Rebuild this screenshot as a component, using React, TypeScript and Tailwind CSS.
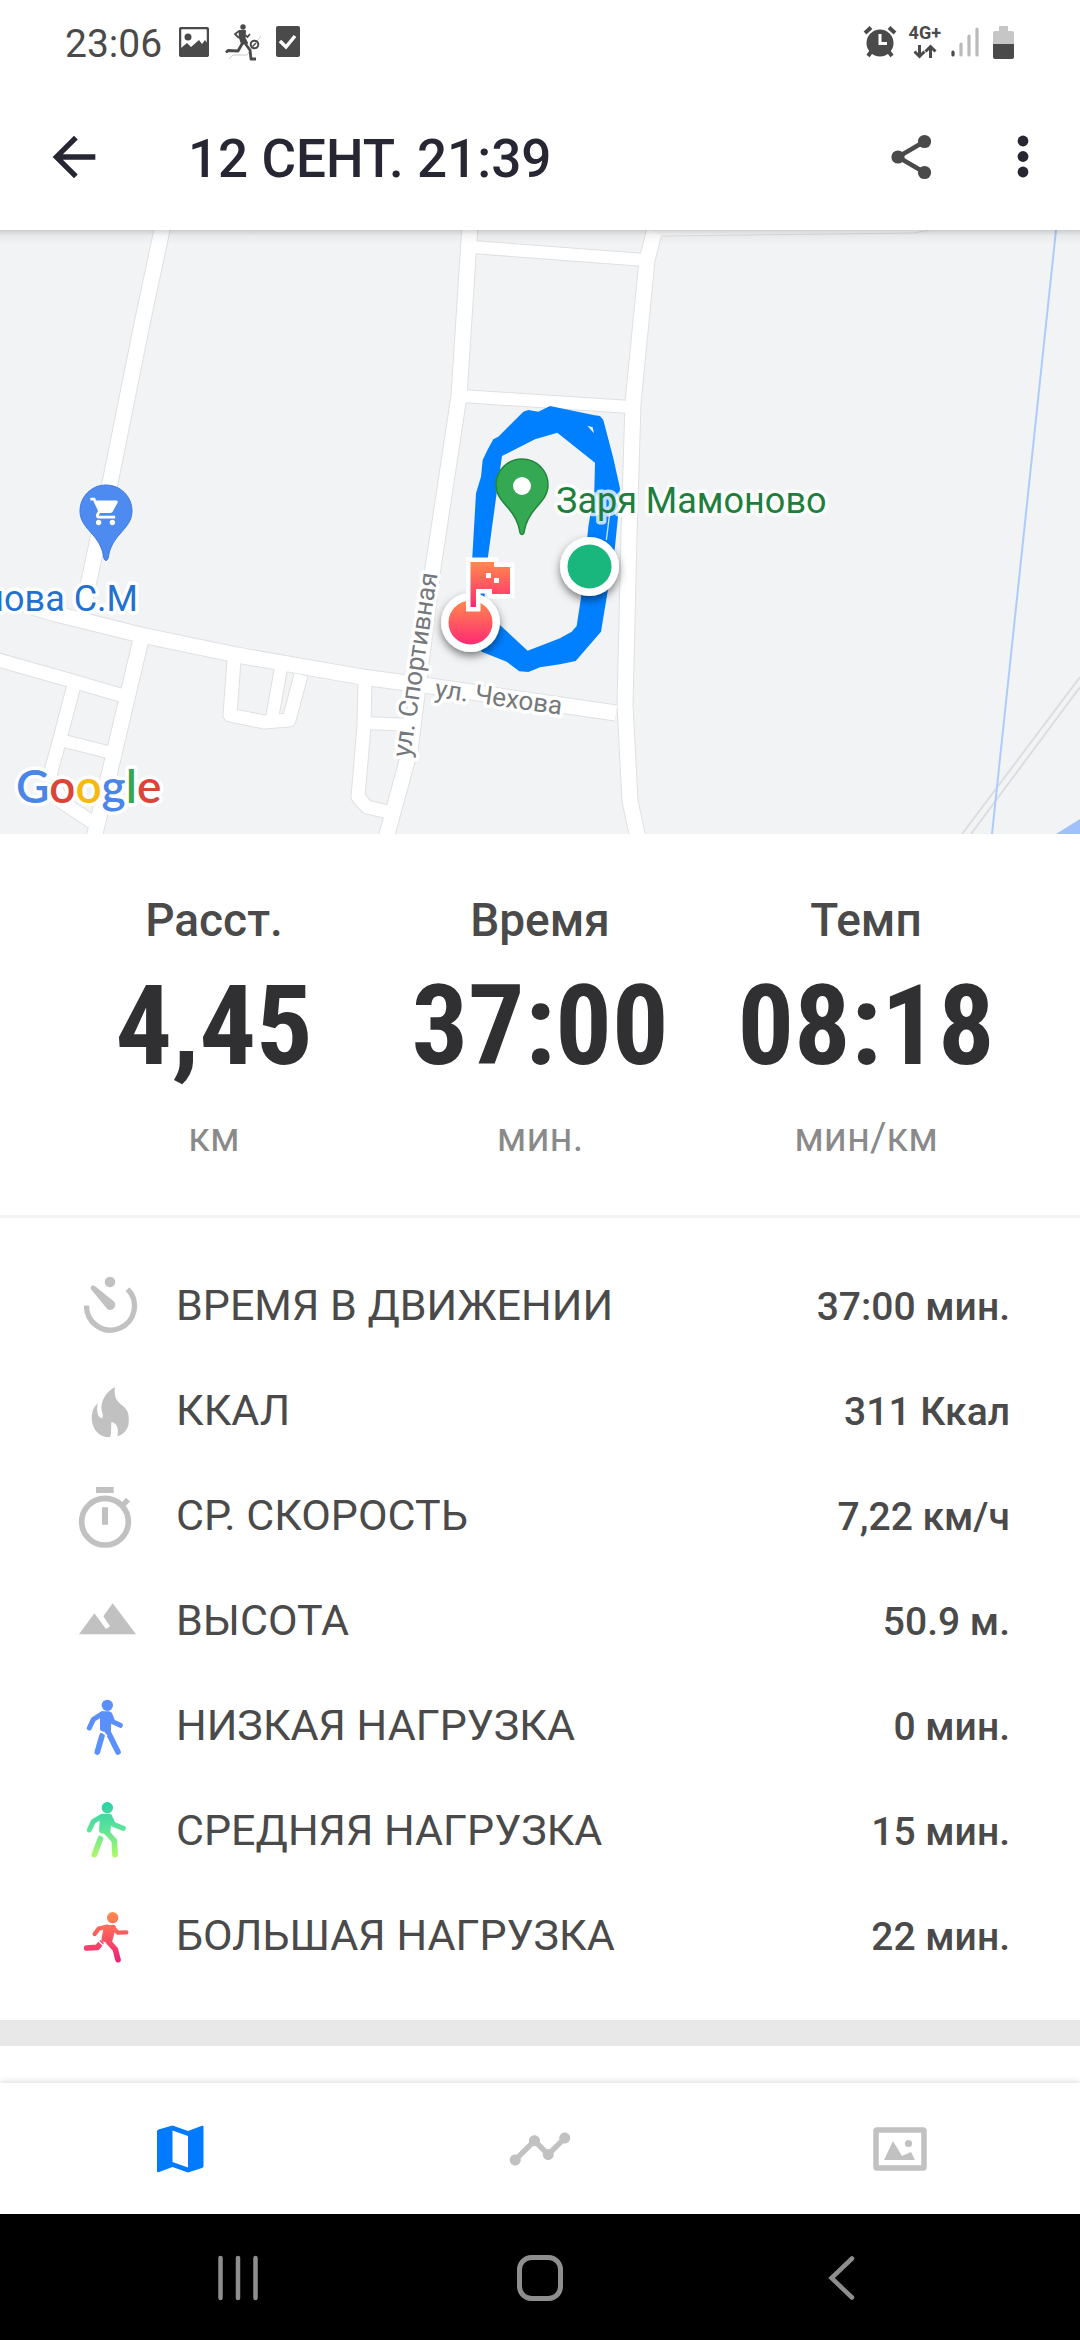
import React from "react";
import { MdArrowBack, MdShoppingCart, MdTimeline } from "react-icons/md";

const PIN =
  "M26 0C11.600 0 0 11.500 0 26C0 36 6 42 13 50C19 57 22 63 23.500 71C24 77 28 77 28.500 71C30 63 33 57 39 50C46 42 52 36 52 26C52 11.500 40.400 0 26 0Z";

/* Streets: [points, width] */
const ROADS: [string, number][] = [
  ["163,-5 142,94 110,253 87,360 83,378", 15],
  ["-5,365 52,383 141,405 237,425 362,447 430,456 616,483", 15],
  ["-5,429 69,450 124,466", 13],
  ["142,405 129,460 113,528 93,612", 15],
  ["74,455 58,516 50,545 62,572 92,592", 13],
  ["64,511 112,523", 12],
  ["234,430 230,485 264,492 289,490 301,445", 13],
  ["281,438 272,488", 12],
  ["365,450 364,496 358,567 367,577 388,582", 13],
  ["366,493 412,495", 12],
  ["470,-5 459,166 433,338 410,520 386,608", 15],
  ["472,17 645,30", 12],
  ["462,166 630,177", 12],
  ["656,-5 647,30 633,173 629,306 625,475 630,571 638,608", 15],
];

function RouteMap() {
  return (
    <svg
      viewBox="0 0 1080 604"
      preserveAspectRatio="xMidYMid slice"
      className="block w-full font-['Roboto',sans-serif]"
      role="img"
      aria-label="Карта маршрута"
    >
      <defs>
        <linearGradient id="finish" x1="0" y1="0" x2="0" y2="1">
          <stop offset="0" stopColor="#ff8a4c" />
          <stop offset="1" stopColor="#ff2975" />
        </linearGradient>
        <linearGradient id="barShadow" x1="0" y1="0" x2="0" y2="1">
          <stop offset="0" stopColor="#000" stopOpacity=".16" />
          <stop offset=".4" stopColor="#000" stopOpacity=".04" />
          <stop offset="1" stopColor="#000" stopOpacity="0" />
        </linearGradient>
        <filter id="drop" x="-50%" y="-50%" width="200%" height="200%">
          <feDropShadow dx="0" dy="4" stdDeviation="4" floodColor="#000" floodOpacity=".5" />
        </filter>
      </defs>
      <rect width="1080" height="604" fill="#f1f3f5" />
      <g fill="none" strokeLinejoin="round">
        {ROADS.map(([p, w]) => (
          <polyline key={p} points={p} stroke="#dfe0e2" strokeWidth={w + 2} />
        ))}
        {ROADS.map(([p, w]) => (
          <polyline key={p} points={p} stroke="#fff" strokeWidth={w} />
        ))}
        <path d="M650 0L662 6L914 3L929 0Z" fill="#fafafa" />
        <path d="M662 6L914 3L929 0" stroke="#dfe0e2" />
        <path d="M962 604L1080 447M971 604L1080 457" stroke="#dcdddf" strokeWidth="2" />
        <path d="M1056 0L992 604" stroke="#aecbfa" strokeWidth="2" />
      </g>
      <path d="M1056 604L1080 589V604Z" fill="#9fc0fa" />

      {/* Recorded laps */}
      <g transform="translate(400 150) scale(.33333)">
        <path
          fillRule="evenodd"
          fill="#0080ff"
          d="M450 78L580 105L600 108L610 120L640 235L660 325L655 400L645 500L603 755L527 843L480 853L420 862L385 876L358 874L320 845L245 815L200 740L217 530L228 340L243 290L248 240L265 205L280 178L295 170L370 95L385 90L415 95ZM472 158L405 178L306 228L290 340L264 530L250 690L303 738L383 812L480 775L515 755L530 738L545 640L565 440L583 330L585 248Z"
        />
        <path d="M562 137L578 142L582 160Z" fill="#f1f3f5" />
        <path d="M629 400L619 480" stroke="#cfe5fb" strokeWidth="4" />
      </g>

      <g transform="translate(80 255)">
        <path d={PIN} fill="#4d8bf0" stroke="#3f79dd" strokeWidth="1" />
        <MdShoppingCart x="9" y="10" size="33" color="#fff" />
      </g>
      <g transform="translate(496 229)">
        <path d={PIN} fill="#34a853" stroke="#22863a" strokeWidth="1.500" />
        <circle cx="26" cy="27" r="9" fill="#fff" />
      </g>

      <g stroke="#fff" strokeLinejoin="round" style={{ paintOrder: "stroke" }}>
        <text x="556" y="283" fontSize="36" fill="#1e7e3c" strokeWidth="7" strokeOpacity=".75">
          Заря Мамоново
        </text>
        <text x="138" y="381" fontSize="36" textAnchor="end" fill="#2271d1" strokeWidth="7">
          нова С.М
        </text>
        <text transform="translate(410 528) rotate(-81.500)" fontSize="26" fill="#75787c" strokeWidth="7">
          ул. Спортивная
        </text>
        <text transform="translate(434 467) rotate(8)" fontSize="26" fill="#75787c" strokeWidth="7">
          ул. Чехова
        </text>
        <text x="16" y="573" fontSize="46" fontWeight="600" strokeWidth="7" className="font-['Lato',sans-serif]">
          <tspan fill="#4a86e8">G</tspan>
          <tspan fill="#dc4437">o</tspan>
          <tspan fill="#f5b912">o</tspan>
          <tspan fill="#4a86e8">g</tspan>
          <tspan fill="#36a556">l</tspan>
          <tspan fill="#dc4437">e</tspan>
        </text>
      </g>

      <circle cx="589.500" cy="336.500" r="29.500" fill="#fff" filter="url(#drop)" />
      <circle cx="589.500" cy="336.500" r="22" fill="#19b67d" />
      <circle cx="470.500" cy="392.500" r="29.500" fill="#fff" filter="url(#drop)" />
      <circle cx="470.500" cy="392.500" r="22" fill="url(#finish)" />
      <path
        d="M470.500 332H494V337H510V364H492V359H476V377H470.500Z"
        fill="url(#finish)"
        stroke="#fff"
        strokeWidth="9"
        style={{ paintOrder: "stroke" }}
      />
      <path d="M486 343h5v5h-5zM494 348h5v5h-5z" fill="#fff" />
      <rect width="1080" height="14" fill="url(#barShadow)" />
    </svg>
  );
}

const GREY = "#c1c1c1";

function Icon({ box, children }: { box: string; children: React.ReactNode }) {
  return (
    <svg viewBox={box} className="h-16 w-16 shrink-0 overflow-visible" aria-hidden="true">
      {children}
    </svg>
  );
}

const MovingIcon = (
  <Icon box="0 0 64 64">
    <circle cx="35" cy="10" r="5.300" fill={GREY} />
    <path d="M11.500 33.500A24 24 0 1 0 52.600 17.200" fill="none" stroke={GREY} strokeWidth="5.300" />
    <path d="M16.500 18C14 14.500 18 12 20.500 14.500L39 29.500C43 34 37 40.500 32.300 37Z" fill={GREY} />
  </Icon>
);

const FlameIcon = (
  <Icon box="45 379 192 192">
    <path
      fill={GREY}
      d="M165 410C150 415 125 440 124 470C124 485 132 492 127 503C115 503 108 485 113 458C95 475 94 497 96 512C100 540 120 560 147 560C154 555 153 550 153 540C155 530 152 520 155 514C172 518 177 535 172 557C190 553 206 535 206 515C208 490 203 476 188 465C170 452 161 440 165 410Z"
    />
  </Icon>
);

const StopwatchIcon = (
  <Icon box="45 694 192 192">
    <g stroke={GREY} fill="none">
      <circle cx="135" cy="813" r="70" strokeWidth="17" />
      <path d="M108 718H161M135 770V822" strokeWidth="18" />
      <path d="M186 766L204 747" strokeWidth="16" />
    </g>
  </Icon>
);

const MountainIcon = (
  <Icon box="45 1009 192 192">
    <path fill={GREY} d="M57 1151L103 1088L138 1135L150 1127L130 1097L158 1058L228 1151Z" />
  </Icon>
);

const WalkIcon = (
  <Icon box="45 154 192 192">
    <g stroke="#5b8ff9" fill="none" strokeLinecap="round" strokeLinejoin="round">
      <path d="M126 285L112 334M138 262L174 334" strokeWidth="17" />
      <path d="M118 270L140 284" stroke="#fff" strokeWidth="4" />
      <path d="M88 262L100 236L126 220M150 222L158 243L181 254" strokeWidth="15" />
      <path d="M128 220H146L145 268L128 264Z" strokeWidth="16" fill="#5b8ff9" />
      <circle cx="142" cy="194" r="17" fill="#5b8ff9" stroke="none" />
    </g>
  </Icon>
);

const JogIcon = (
  <Icon box="45 469 192 192">
    <linearGradient id="jog" gradientUnits="userSpaceOnUse" x1="0" y1="485" x2="0" y2="650">
      <stop offset="0" stopColor="#27d3a4" />
      <stop offset=".5" stopColor="#5fe39b" />
      <stop offset="1" stopColor="#b0fa62" />
    </linearGradient>
    <g stroke="url(#jog)" fill="none" strokeLinecap="round" strokeLinejoin="round">
      <path d="M122 592L103 642M140 575L163 600L165 642" strokeWidth="17" />
      <path d="M112 578L136 592" stroke="#fff" strokeWidth="4" />
      <path d="M88 568L100 542L126 527M150 530L160 551L190 563" strokeWidth="15" />
      <path d="M128 527H148L143 574L125 570Z" strokeWidth="16" fill="url(#jog)" />
      <circle cx="142" cy="501" r="17" fill="url(#jog)" stroke="none" />
    </g>
  </Icon>
);

const RunIcon = (
  <Icon box="45 784 192 192">
    <linearGradient id="run" gradientUnits="userSpaceOnUse" x1="0" y1="815" x2="0" y2="965">
      <stop offset="0" stopColor="#ff8a50" />
      <stop offset=".5" stopColor="#fb5560" />
      <stop offset="1" stopColor="#ee1f7c" />
    </linearGradient>
    <g stroke="url(#run)" fill="none" strokeLinecap="round" strokeLinejoin="round">
      <path d="M80 922L112 920L122 908M145 903L166 926L174 957" strokeWidth="17" />
      <path d="M112 898L134 918" stroke="#fff" strokeWidth="4" />
      <path d="M104 880L116 864L142 858M162 864L174 876L199 875" strokeWidth="13" />
      <path d="M138 862L160 860L150 898L132 896Z" strokeWidth="15" fill="url(#run)" />
      <circle cx="158" cy="831" r="17" fill="url(#run)" stroke="none" />
    </g>
  </Icon>
);

const DETAILS = [
  { icon: MovingIcon, label: "ВРЕМЯ В ДВИЖЕНИИ", value: "37:00 мин." },
  { icon: FlameIcon, label: "ККАЛ", value: "311 Ккал" },
  { icon: StopwatchIcon, label: "СР. СКОРОСТЬ", value: "7,22 км/ч" },
  { icon: MountainIcon, label: "ВЫСОТА", value: "50.9 м." },
  { icon: WalkIcon, label: "НИЗКАЯ НАГРУЗКА", value: "0 мин." },
  { icon: JogIcon, label: "СРЕДНЯЯ НАГРУЗКА", value: "15 мин." },
  { icon: RunIcon, label: "БОЛЬШАЯ НАГРУЗКА", value: "22 мин." },
];

const STATS = [
  { label: "Расст.", value: "4,45", unit: "км" },
  { label: "Время", value: "37:00", unit: "мин." },
  { label: "Темп", value: "08:18", unit: "мин/км" },
];

function StatusBar() {
  return (
    <div className="flex h-[84px] items-center justify-between pr-[66px] pl-[65px] text-[#4a4a4a]">
      <div className="flex items-center">
        <span className="pt-1 text-[39px] leading-none">23:06</span>
        <svg viewBox="0 0 30 30" className="ml-[17px] h-[30px] w-[30px]" aria-hidden="true">
          <rect x="1" y="1" width="28" height="28" rx="2" fill="none" stroke="currentColor" strokeWidth="2.500" />
          <circle cx="9" cy="10" r="3.500" fill="currentColor" />
          <path d="M2 21L8 16L12 20L20 13L23 17L26 13L29 17V29H2Z" fill="currentColor" />
        </svg>
        <svg viewBox="0 0 36 37" className="ml-4 h-[37px] w-9" fill="none" stroke="currentColor" aria-hidden="true">
          <path d="M4 35L8 31H22L36 12" stroke="#ccc" strokeWidth="1" />
          <circle cx="18" cy="3" r="2.700" fill="currentColor" stroke="none" />
          <path d="M14.500 7L20 7L19.500 14L22 19L17 20L15 14Z" fill="currentColor" strokeWidth="2" strokeLinejoin="round" />
          <path d="M14 7L10 10L14 14M20 11L22.500 13L25 10" strokeWidth="1.800" />
          <path d="M17 20L13 27L3 26.500L1 28.500M20.500 20L25 26L26 35L31 35" strokeWidth="2.800" strokeLinejoin="round" />
          <circle cx="29.500" cy="20.500" r="3.800" strokeWidth="2" />
          <path d="M27.500 22.500L31 19" strokeWidth="1.500" />
        </svg>
        <svg viewBox="0 0 26 32" className="ml-[14px] h-8 w-[26px]" aria-hidden="true">
          <rect x="1" width="24" height="31" rx="2" fill="currentColor" />
          <path d="M5 15L11 21L20 10" fill="none" stroke="#fff" strokeWidth="3.500" />
        </svg>
      </div>
      <div className="flex items-center">
        <svg viewBox="0 0 34 34" className="h-[34px] w-[34px]" fill="none" stroke="currentColor" aria-hidden="true">
          <circle cx="17" cy="18" r="13.500" fill="currentColor" stroke="none" />
          <path d="M2 8L8 2.500M32 8L26 2.500" strokeWidth="4" />
          <path d="M8 27L5 31M26 27L29 31" strokeWidth="4" />
          <path d="M17 9V18.500H24" stroke="#fff" strokeWidth="3" />
        </svg>
        <div className="ml-3 flex flex-col items-center gap-1">
          <span className="h-[15px] text-[18px] leading-[15px] font-bold">4G+</span>
          <svg viewBox="0 0 24 15" className="h-[15px] w-6" fill="none" stroke="currentColor" aria-hidden="true">
            <path d="M6.500 1V12M1.500 7.500L6.500 12.500L11.500 7.500M17.500 14V3M12.500 7.500L17.500 2.500L22.500 7.500" strokeWidth="3" />
          </svg>
        </div>
        <svg viewBox="0 0 28 30" className="ml-[10px] h-[30px] w-7" strokeWidth="3.200" strokeLinecap="round" aria-hidden="true">
          <path d="M2 25V28" stroke="#4a4a4a" />
          <path d="M10 17V28M18 9V28M26 2V28" stroke="#bababa" />
        </svg>
        <svg viewBox="0 0 21 33" className="ml-[14px] h-[33px] w-[21px]" aria-hidden="true">
          <path d="M6 0H15V5H19Q21 5 21 7V18H0V7Q0 5 2 5H6Z" fill="#c6c6c6" />
          <path d="M0 18H21V31Q21 33 19 33H2Q0 33 0 31Z" fill="#4a4a4a" />
        </svg>
      </div>
    </div>
  );
}

export default function App() {
  return (
    <div className="flex min-h-screen flex-col bg-white font-['Roboto',sans-serif] text-[#4a4a4a]">
      <StatusBar />

      <header className="flex h-[146px] items-center pr-[33px] pl-[42px] text-[#272733]">
        <button type="button" aria-label="Назад">
          <MdArrowBack size={64} />
        </button>
        <h1 className="ml-[82px] flex-1 pt-1 text-[53px] leading-[62px] font-medium whitespace-nowrap">12 СЕНТ. 21:39</h1>
        <button type="button" aria-label="Поделиться" className="text-[#4a4a4a]">
          <svg viewBox="0 0 48 48" className="h-12 w-12">
            <path d="M37.500 8.500L11 24L37.500 39.500" fill="none" stroke="currentColor" strokeWidth="4.500" />
            <circle cx="37.500" cy="8.500" r="6.600" fill="currentColor" />
            <circle cx="11" cy="24" r="6.600" fill="currentColor" />
            <circle cx="37.500" cy="39.500" r="6.600" fill="currentColor" />
          </svg>
        </button>
        <button type="button" aria-label="Ещё" className="ml-16">
          <svg viewBox="0 0 48 48" className="h-12 w-12" fill="currentColor">
            <circle cx="24" cy="8" r="5.400" />
            <circle cx="24" cy="23.500" r="5.400" />
            <circle cx="24" cy="39" r="5.400" />
          </svg>
        </button>
      </header>

      <main className="flex flex-1 flex-col">
        <RouteMap />

        <section className="grid grid-cols-3 border-b-[3px] border-[#f3f3f3] px-[51px] pt-[58px] pb-[53px] text-center">
          {STATS.map((s) => (
            <div key={s.label}>
              <div className="text-[46px] leading-[56px] font-medium">{s.label}</div>
              <div className="mt-[22px] font-['Roboto_Condensed','Roboto',sans-serif] text-[112px] leading-[112px] font-bold text-[#303032]">
                {s.value}
              </div>
              <div className="mt-8 text-[40px] leading-[48px] text-[#8a8a8a]">{s.unit}</div>
            </div>
          ))}
        </section>

        <dl className="pt-[33px] pr-[70px] pb-[34px] pl-[75px]">
          {DETAILS.map((d) => (
            <div key={d.label} className="flex h-[105px] items-center">
              {d.icon}
              <dt className="ml-[37px] flex-1 pt-[2px] text-[43px] leading-[52px]">{d.label}</dt>
              <dd className="pt-[6px] text-[39px] leading-[44px] font-medium">{d.value}</dd>
            </div>
          ))}
        </dl>

        <div className="h-[26px] bg-[#e8e8e8]" />
      </main>

      <nav className="grid h-[131px] grid-cols-3 bg-white shadow-[0_-2px_6px_rgba(0,0,0,0.12)]">
        <button type="button" aria-label="Карта" className="flex items-center justify-center">
          <svg viewBox="0 0 48 48" className="h-12 w-12">
            <path
              fillRule="evenodd"
              fill="#007aff"
              d="M1 6.500Q1 5 2.500 4.500L16.500 .500L32 6L46 .800Q47.500 .500 47.500 2V41Q47.500 42.500 46 43L32 47.500L16.500 42L2.500 47.300Q1 47.500 1 46ZM16.500 5.500V37L32 42.500V11Z"
            />
          </svg>
        </button>
        <button type="button" aria-label="Графики" className="flex items-center justify-center">
          <MdTimeline size={66} color="#c1c1c1" />
        </button>
        <button type="button" aria-label="Фото" className="flex items-center justify-center">
          <svg viewBox="0 0 54 44" className="h-11 w-[54px]">
            <rect x="3" y="3" width="48" height="38" rx="1" fill="none" stroke="#c1c1c1" strokeWidth="5.500" />
            <path d="M11 33L20 14L29 29L38 25L42 33Z" fill="#c1c1c1" />
            <circle cx="35.500" cy="16.500" r="3.600" fill="#c1c1c1" />
          </svg>
        </button>
      </nav>

      <div className="grid h-[126px] grid-cols-3 bg-black px-[87px] pt-[2px]">
        <button type="button" aria-label="Недавние приложения" className="flex items-center justify-center">
          <svg viewBox="0 0 48 48" className="h-12 w-12" stroke="#8e8e8e" strokeWidth="4.500" strokeLinecap="round">
            <path d="M6.500 4V44M24 4V44M41.500 4V44" />
          </svg>
        </button>
        <button type="button" aria-label="Главный экран" className="flex items-center justify-center">
          <svg viewBox="0 0 48 48" className="h-12 w-12">
            <rect x="3.500" y="3.500" width="41" height="41" rx="12" fill="none" stroke="#8e8e8e" strokeWidth="5" />
          </svg>
        </button>
        <button type="button" aria-label="Назад" className="flex items-center justify-center">
          <svg viewBox="0 0 48 48" className="h-12 w-12" fill="none" stroke="#8e8e8e" strokeWidth="4.500" strokeLinecap="round">
            <path d="M34 4.500L13.500 24L34 43.500" />
          </svg>
        </button>
      </div>
    </div>
  );
}
